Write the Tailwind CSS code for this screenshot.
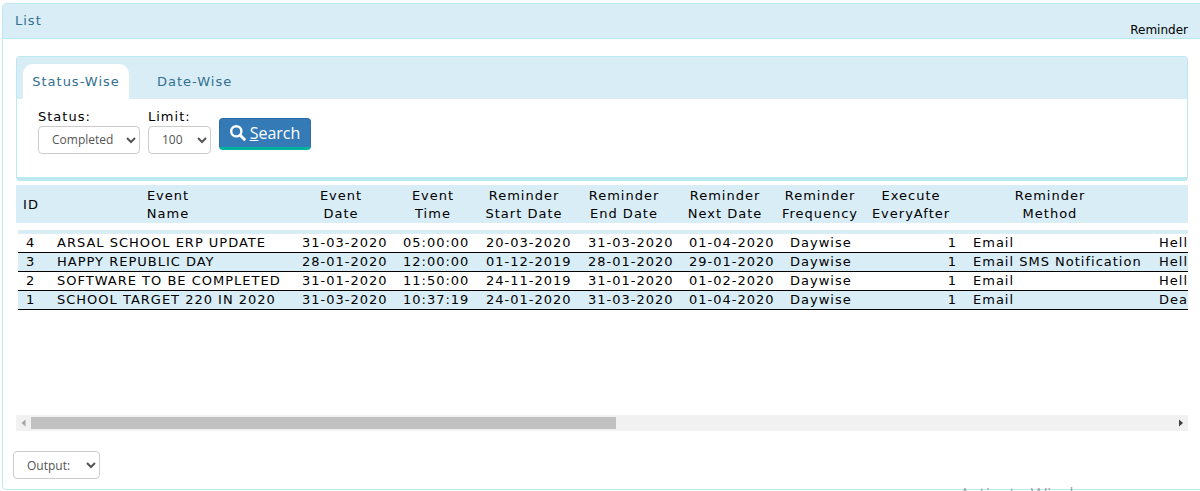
<!DOCTYPE html>
<html lang="en">

<head>
  <meta charset="utf-8">
  <meta name="viewport" content="width=device-width, initial-scale=1">
  <script src="https://cdn.jsdelivr.net/npm/@tailwindcss/browser@4"></script>
  <title>Reminder List</title>
</head>

<body class="overflow-hidden bg-white font-['DejaVu_Sans',sans-serif] text-[13px] leading-[18px] text-black">
  <div class="-mr-2 ml-[2px] mt-[3px] rounded border border-[#bce8f1]">
    <!-- panel heading -->
    <div class="flex h-[35px] items-end justify-between border-b border-[#bce8f1] bg-[#d9edf7] pl-3 pr-[19px]">
      <h3 class="pb-2 tracking-[1px] text-[#31708f]">List</h3>
      <span class="text-[12px] leading-4">Reminder</span>
    </div>

    <div class="pb-[10px] pl-[13px] pr-[19px] pt-[17px]">
      <!-- tabs -->
      <div class="rounded border border-b-4 border-[#bce8f1]">
        <div class="flex bg-[#d9edf7] pl-[6px] pt-[7px] tracking-[1px] text-[#31708f]" role="tablist">
          <button type="button" role="tab" aria-selected="true" class="h-[35px] w-[106px] rounded-t-[10px] bg-white">Status-Wise</button>
          <button type="button" role="tab" aria-selected="false" class="ml-5 h-[35px] px-2">Date-Wise</button>
        </div>
        <form class="flex h-[78px] gap-2 pl-[21px] pt-[9px]">
          <div class="flex flex-col">
            <label for="status" class="tracking-[1px]">Status:</label>
            <select id="status" class="h-7 w-[102px] rounded border border-[#ccc] bg-white pb-[2px] pl-[9px] font-['Open_Sans',sans-serif] text-[12px] text-[#555]">
              <option>Completed</option>
              <option>Pending</option>
            </select>
          </div>
          <div class="flex flex-col">
            <label for="limit" class="tracking-[1px]">Limit:</label>
            <select id="limit" class="h-7 w-[63px] rounded border border-[#ccc] bg-white pb-[2px] pl-[9px] font-['Open_Sans',sans-serif] text-[12px] text-[#555]">
              <option>100</option>
              <option>500</option>
            </select>
          </div>
          <button type="button" class="mt-[10px] flex h-8 w-[92px] items-center justify-center gap-1 rounded border border-b-3 border-[#2e6da4] border-b-[#00b19d] bg-[#337ab7] font-['Open_Sans',sans-serif] text-base text-white">
            <svg class="size-4" viewBox="0 0 16 16" fill="none" stroke="currentColor">
              <circle cx="6.3" cy="6.3" r="5.1" stroke-width="2.4" />
              <path d="M10.2 10.2l4.1 4.1" stroke-width="3" stroke-linecap="round" />
            </svg>
            <span><u>S</u>earch</span>
          </button>
        </form>
      </div>

      <!-- list -->
      <div class="mt-1 h-[230px] overflow-hidden tracking-[1px]">
        <table class="w-[1426px] table-fixed">
          <colgroup>
            <col class="w-[30px]"><col class="w-[244px]"><col class="w-[102px]"><col class="w-[82px]"><col class="w-[100px]"><col class="w-[100px]"><col class="w-[102px]"><col class="w-[88px]"><col class="w-[94px]"><col class="w-[184px]"><col class="w-[300px]">
          </colgroup>
          <thead>
            <tr class="h-[38px] bg-[#d9edf7] *:px-0 *:pb-0 *:pt-[2px] *:font-normal">
              <th>ID</th>
              <th>Event<br>Name</th>
              <th>Event<br>Date</th>
              <th>Event<br>Time</th>
              <th>Reminder<br>Start Date</th>
              <th>Reminder<br>End Date</th>
              <th>Reminder<br>Next Date</th>
              <th>Reminder<br>Frequency</th>
              <th>Execute<br>EveryAfter</th>
              <th>Reminder<br>Method</th>
              <td></td>
            </tr>
          </thead>
        </table>
        <table class="ml-[2px] mt-[7px] w-[1433px] table-fixed border-t-4 border-[#d9edf7]">
          <colgroup>
            <col class="w-[31px]"><col class="w-[245px]"><col class="w-[101px]"><col class="w-[83px]"><col class="w-[102px]"><col class="w-[101px]"><col class="w-[101px]"><col class="w-[82px]"><col class="w-[101px]"><col class="w-[186px]"><col class="w-[300px]">
          </colgroup>
          <tbody class="whitespace-nowrap">
            <tr class="h-[19px] border-b border-black *:px-2 *:py-0">
              <td>4</td><td>ARSAL SCHOOL ERP UPDATE</td><td>31-03-2020</td><td>05:00:00</td><td>20-03-2020</td><td>31-03-2020</td><td>01-04-2020</td><td>Daywise</td><td class="text-right">1</td><td>Email</td><td>Hello</td>
            </tr>
            <tr class="h-[19px] border-b border-black bg-[#d9edf7] *:px-2 *:py-0">
              <td>3</td><td>HAPPY REPUBLIC DAY</td><td>28-01-2020</td><td>12:00:00</td><td>01-12-2019</td><td>28-01-2020</td><td>29-01-2020</td><td>Daywise</td><td class="text-right">1</td><td>Email SMS Notification</td><td>Hello</td>
            </tr>
            <tr class="h-[19px] border-b border-black *:px-2 *:py-0">
              <td>2</td><td>SOFTWARE TO BE COMPLETED</td><td>31-01-2020</td><td>11:50:00</td><td>24-11-2019</td><td>31-01-2020</td><td>01-02-2020</td><td>Daywise</td><td class="text-right">1</td><td>Email</td><td>Hello</td>
            </tr>
            <tr class="h-[19px] border-b border-black bg-[#d9edf7] *:px-2 *:py-0">
              <td>1</td><td>SCHOOL TARGET 220 IN 2020</td><td>31-03-2020</td><td>10:37:19</td><td>24-01-2020</td><td>31-03-2020</td><td>01-04-2020</td><td>Daywise</td><td class="text-right">1</td><td>Email</td><td>Dear</td>
            </tr>
          </tbody>
        </table>
      </div>

      <!-- horizontal scrollbar -->
      <div class="flex h-4 items-center justify-between bg-[#f1f1f1]">
        <svg class="h-4 w-[15px] shrink-0 fill-[#a3a3a3]" viewBox="0 0 15 16"><path d="M9.5 4.5v7L5.5 8z" /></svg>
        <div class="h-3 flex-1"><div class="h-3 w-[51.2%] bg-[#c1c1c1]"></div></div>
        <svg class="h-4 w-[15px] shrink-0 fill-[#404040]" viewBox="0 0 15 16"><path d="M6 4.5v7L10 8z" /></svg>
      </div>

      <select aria-label="Output" class="-ml-[3px] mt-5 block h-7 w-[87px] rounded border border-[#ccc] bg-white pl-[9px] font-['Open_Sans',sans-serif] text-[12px] text-[#555]">
        <option>Output:</option>
        <option>PDF</option>
        <option>Excel</option>
      </select>
    </div>
  </div>

  <!-- system watermark, cut by the window edge -->
  <div class="pointer-events-none fixed inset-x-0 bottom-0 flex h-1 items-start justify-end overflow-hidden pr-[93px] font-['Open_Sans',sans-serif] text-[18px] leading-[14px] text-[#aaa]">
    <span>Activate Windows</span>
  </div>
</body>

</html>
